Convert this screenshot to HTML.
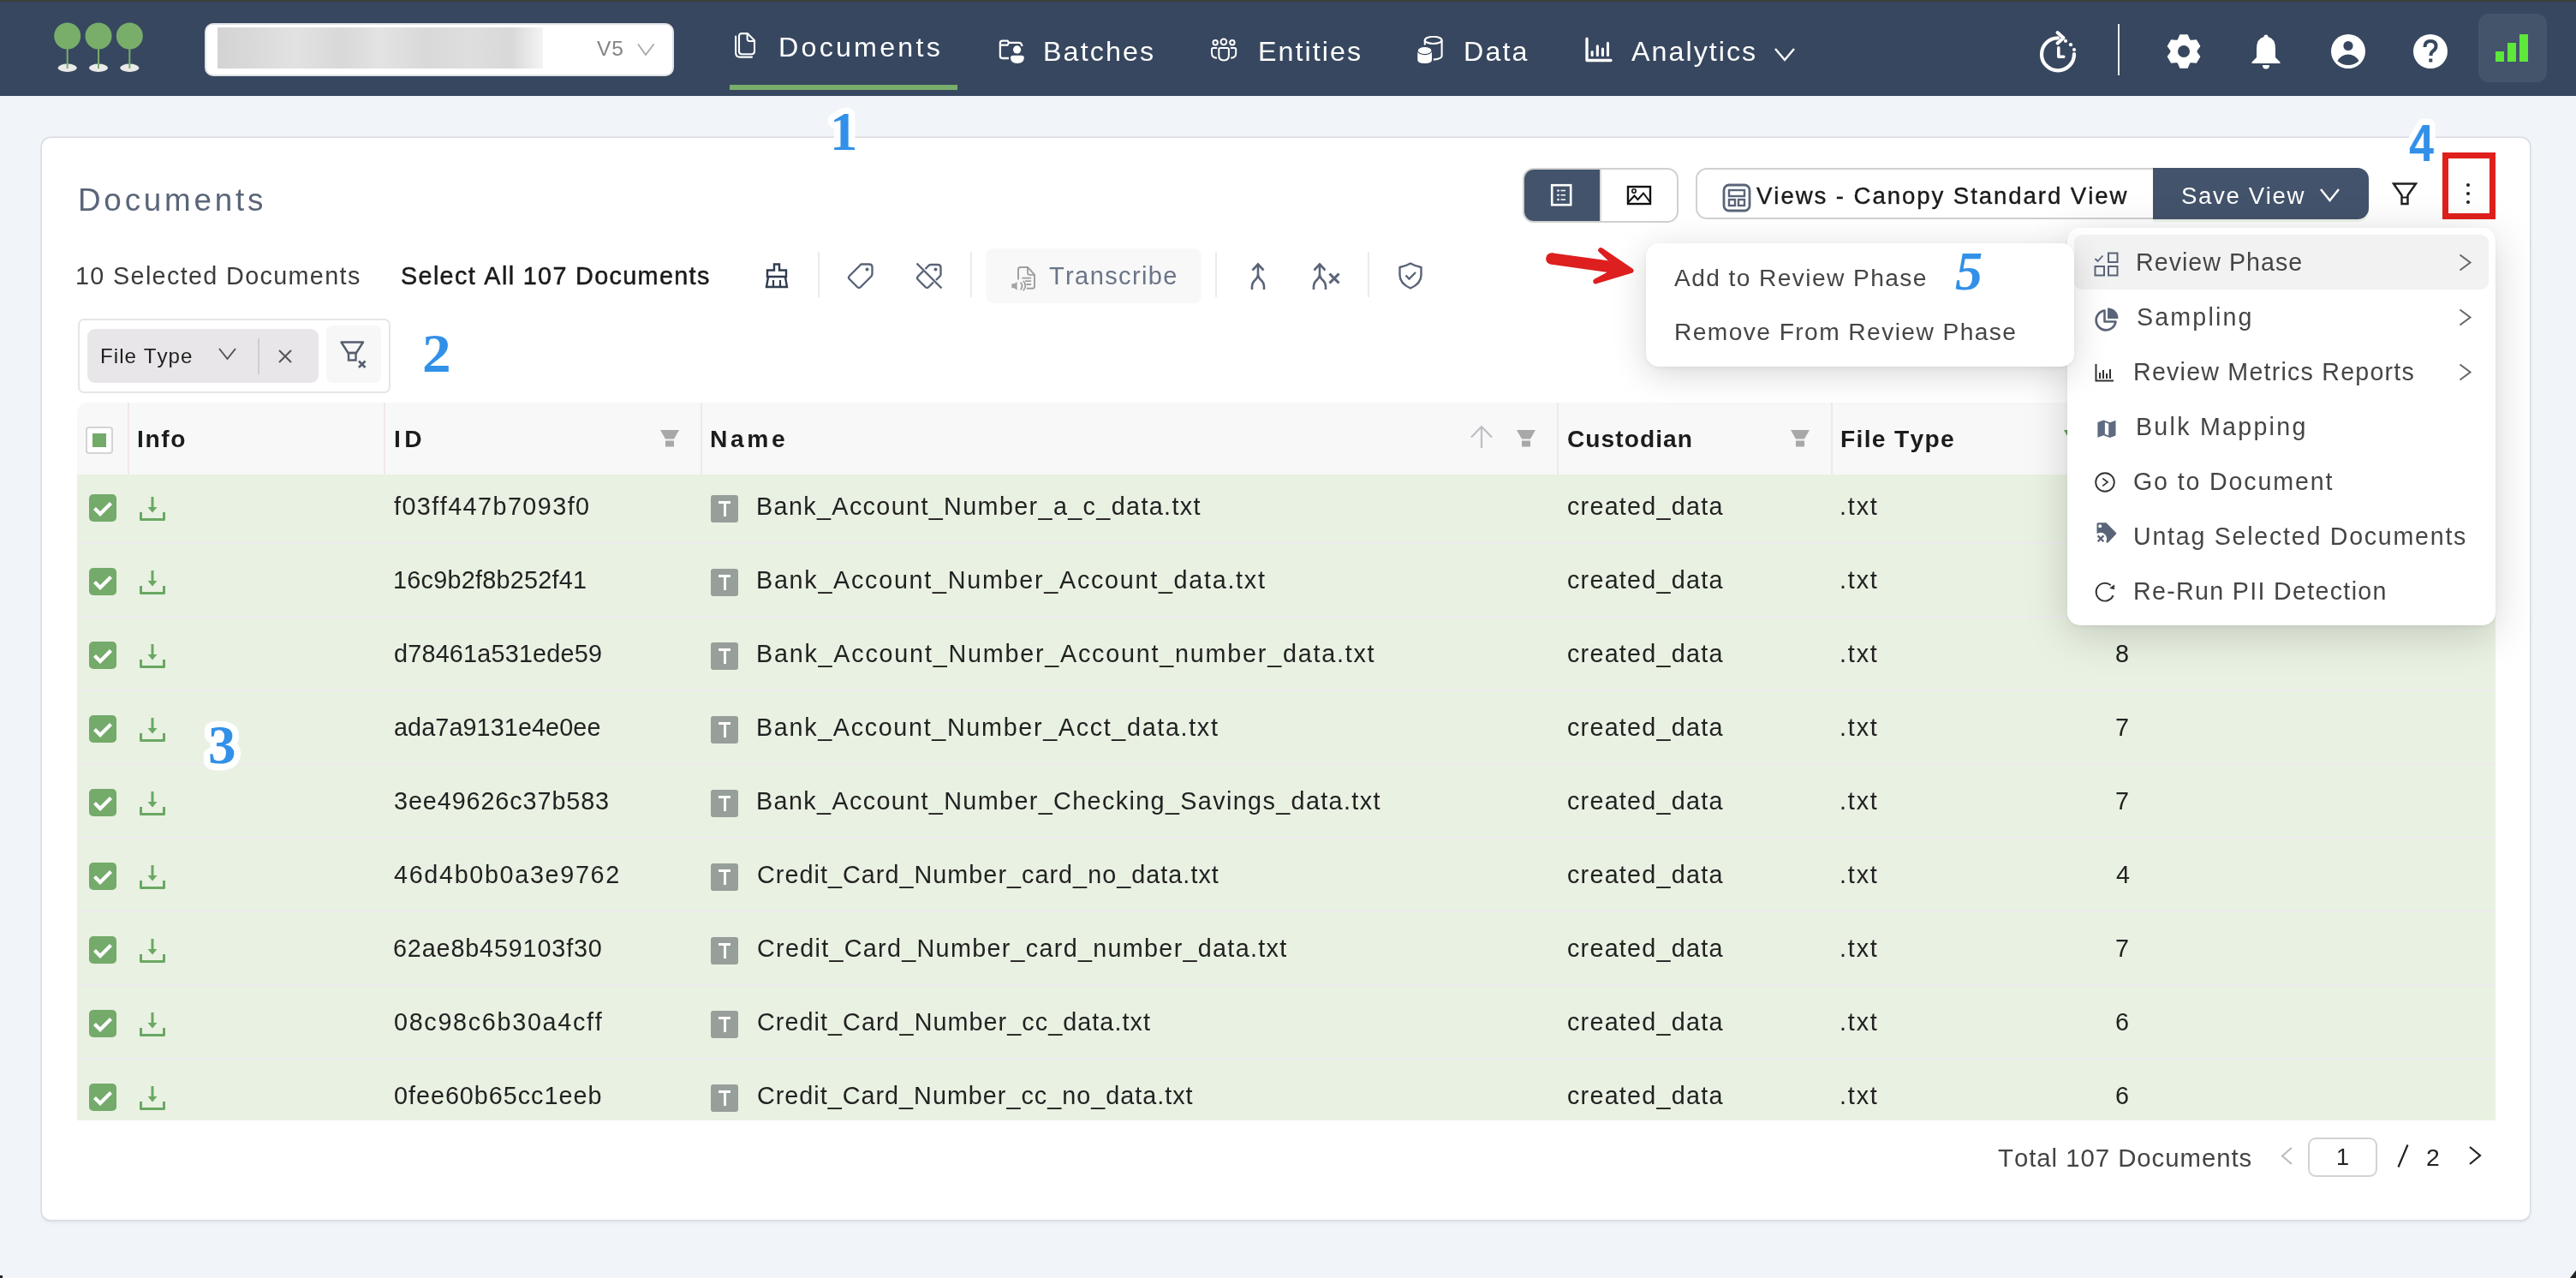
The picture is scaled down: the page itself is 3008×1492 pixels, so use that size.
<!DOCTYPE html>
<html><head><meta charset="utf-8">
<style>
html,body{margin:0;padding:0;}
body{width:3008px;height:1492px;overflow:hidden;background:#f1f4f9;position:relative;font-family:"Liberation Sans",sans-serif;font-kerning:none;}
.b{position:absolute;}
.t{position:absolute;white-space:nowrap;will-change:transform;}
</style></head><body>
<div class="b" style="left:0px;top:0px;width:3008px;height:2px;background:#3b3e38"></div><div class="b" style="left:0px;top:2px;width:3008px;height:110px;background:#37475f"></div><svg class="b" style="left:0px;top:0px;width:200px;height:112px;" viewBox="0 0 200 112"><ellipse cx="78.7" cy="79.3" rx="11" ry="4.7" fill="#eaeaea"/><rect x="77.7" y="50" width="2" height="30" fill="#78ae6a"/><circle cx="78.7" cy="42" r="15.5" fill="#78ae6a"/><ellipse cx="115.0" cy="79.3" rx="11" ry="4.7" fill="#eaeaea"/><rect x="114.0" y="50" width="2" height="30" fill="#78ae6a"/><circle cx="115.0" cy="42" r="15.5" fill="#78ae6a"/><ellipse cx="151.3" cy="79.3" rx="11" ry="4.7" fill="#eaeaea"/><rect x="150.3" y="50" width="2" height="30" fill="#78ae6a"/><circle cx="151.3" cy="42" r="15.5" fill="#78ae6a"/></svg><div class="b" style="left:239px;top:27px;width:548px;height:62px;background:#fff;border-radius:10px;border:2px solid #dfe3e8;box-sizing:border-box"></div><div class="b" style="left:254px;top:32px;width:380px;height:48px;background:linear-gradient(90deg,#d3d3d3 0%,#dadada 12%,#e2e2e2 24%,#d8d8d8 38%,#e3e3e3 50%,#d9d9d9 64%,#dedede 78%,#d8d8d8 90%,#f4f4f4 100%)"></div><div class="t" style="left:697.00px;top:45.11px;font-size:24.56px;line-height:24.56px;color:#848484;font-weight:400;letter-spacing:0.850px;font-family:'Liberation Sans', sans-serif;">V5</div><svg class="b" style="left:743px;top:49px;width:22px;height:18px;" viewBox="0 0 22 18"><path d="M2 2.5 L11 15 L20.5 2.5" fill="none" stroke="#a8a8a8" stroke-width="1.8"/></svg><svg class="b" style="left:856px;top:37px;width:28px;height:32px;" viewBox="0 0 28 32"><path d="M7 5.2 Q7 2.1 10.1 2.1 H16.8 L25 10.2 V23.1 Q25 26.2 21.9 26.2 H10.1 Q7 26.2 7 23.1 Z" fill="none" stroke="#fff" stroke-width="2.1" stroke-linejoin="round"/><path d="M16.6 2.3 V8.3 Q16.6 10.9 19.2 10.9 H24.8" fill="none" stroke="#fff" stroke-width="2" stroke-linejoin="round"/><path d="M3.1 5.6 V24.4 Q3.1 29.6 8.3 29.6 H22" fill="none" stroke="#fff" stroke-width="2.1" stroke-linecap="round"/></svg><div class="t" style="left:909.10px;top:38.88px;font-size:32.27px;line-height:32.27px;color:#fff;font-weight:400;letter-spacing:3.200px;font-family:'Liberation Sans', sans-serif;">Documents</div><div class="b" style="left:852px;top:99px;width:266px;height:6px;background:#78ae6a"></div><svg class="b" style="left:1165px;top:45px;width:32px;height:30px;" viewBox="0 0 32 30"><path d="M13 23 H5.5 Q2.9 23 2.9 20.3 V5.2 Q2.9 2.6 5.5 2.6 H11.3 L13.2 4.8 H25 Q27.6 4.8 28.6 9" fill="none" stroke="#fff" stroke-width="2.3" stroke-linejoin="round"/><path d="M2.9 7.6 H11.5 L13.2 4.8" fill="none" stroke="#fff" stroke-width="2.1" stroke-linejoin="round"/><circle cx="22.6" cy="12.9" r="4.6" fill="#fff"/><path d="M15 22.6 Q15 19.8 18 19.8 H27.8 Q30.8 19.8 30.8 22.6 Q30.8 28.9 22.9 28.9 Q15 28.9 15 22.6 Z" fill="#fff"/></svg><div class="t" style="left:1218.30px;top:43.88px;font-size:32.27px;line-height:32.27px;color:#fff;font-weight:400;letter-spacing:2.100px;font-family:'Liberation Sans', sans-serif;">Batches</div><svg class="b" style="left:1412px;top:43px;width:34px;height:30px;" viewBox="0 0 34 30"><circle cx="7.2" cy="6.7" r="2.7" fill="none" stroke="#fff" stroke-width="2"/><circle cx="16.9" cy="5.8" r="3.4" fill="none" stroke="#fff" stroke-width="2"/><circle cx="26.9" cy="6.7" r="2.7" fill="none" stroke="#fff" stroke-width="2"/><path d="M9.3 13 H4.6 Q3 13 3 14.6 V18.8 Q3 24.7 9 24.7" fill="none" stroke="#fff" stroke-width="2"/><path d="M11.3 14.8 Q11.3 13 13.1 13 H21.1 Q22.9 13 22.9 14.8 V21.6 Q22.9 27.5 17.1 27.5 Q11.3 27.5 11.3 21.6 Z" fill="none" stroke="#fff" stroke-width="2"/><path d="M24.9 13 H29.6 Q31.2 13 31.2 14.6 V18.8 Q31.2 24.7 25.2 24.7" fill="none" stroke="#fff" stroke-width="2"/></svg><div class="t" style="left:1468.50px;top:43.88px;font-size:32.27px;line-height:32.27px;color:#fff;font-weight:400;letter-spacing:2.036px;font-family:'Liberation Sans', sans-serif;">Entities</div><svg class="b" style="left:1654px;top:42px;width:32px;height:36px;" viewBox="0 0 32 36"><ellipse cx="19.7" cy="4.9" rx="9.9" ry="4.1" fill="none" stroke="#fff" stroke-width="2.1"/><path d="M9.8 4.9 V10.5 M29.6 4.9 V23.5 Q29.6 26.6 19.8 27.6" fill="none" stroke="#fff" stroke-width="2.1"/><path d="M1.3 17 V27.8 Q1.3 32.1 9.65 32.1 Q18 32.1 18 27.8 V17 Z" fill="#fff"/><ellipse cx="9.65" cy="17" rx="8.35" ry="4.6" fill="#fff" stroke="#37475f" stroke-width="1.1"/></svg><div class="t" style="left:1709.40px;top:43.88px;font-size:32.27px;line-height:32.27px;color:#fff;font-weight:400;letter-spacing:2.117px;font-family:'Liberation Sans', sans-serif;">Data</div><svg class="b" style="left:1846px;top:40px;width:40px;height:36px;" viewBox="0 0 40 36"><path d="M7 5.1 V30.5 H35" fill="none" stroke="#fff" stroke-width="3.3" stroke-linecap="round" stroke-linejoin="round"/><path d="M13.15 20.5 V24.5 M19.35 13.7 V24.5 M25.45 17 V24.5 M31.5 10.4 V24.5" fill="none" stroke="#fff" stroke-width="3.1" stroke-linecap="round"/></svg><div class="t" style="left:1904.90px;top:43.88px;font-size:32.27px;line-height:32.27px;color:#fff;font-weight:400;letter-spacing:2.012px;font-family:'Liberation Sans', sans-serif;">Analytics</div><svg class="b" style="left:2071px;top:53px;width:26px;height:20px;" viewBox="0 0 26 20"><path d="M2 4 L13 17 L24 4" fill="none" stroke="#fff" stroke-width="2.4"/></svg><svg class="b" style="left:2380px;top:34px;width:47px;height:51px;" viewBox="0 0 47 51"><path d="M23 10.3 A19 19 0 1 0 42 29" fill="none" stroke="#fff" stroke-width="4.2" stroke-linecap="round"/><path d="M22.5 4 L29.5 10.2 L22.5 16.4" fill="none" stroke="#fff" stroke-width="4" stroke-linecap="round" stroke-linejoin="round"/><circle cx="32" cy="13.8" r="2.1" fill="#fff"/><circle cx="38" cy="18.2" r="2.1" fill="#fff"/><circle cx="42" cy="24" r="2.1" fill="#fff"/><path d="M23.8 21.8 V32.2 H29.8" fill="none" stroke="#fff" stroke-width="3.6" stroke-linecap="round" stroke-linejoin="round"/></svg><div class="b" style="left:2472.5px;top:28px;width:2.0px;height:60px;background:#e8ebef"></div><svg class="b" style="left:2530px;top:40px;width:40px;height:40px;" viewBox="0 0 40 40"><g transform="translate(20,20)"><path fill="#fff" fill-rule="evenodd" d="M-6.63 -14.89 L-4.57 -19.78 L4.57 -19.78 L6.63 -14.89 L7.65 -13.25 L9.58 -13.19 L14.85 -13.84 L19.41 -5.94 L16.21 -1.70 L15.30 0.00 L16.21 1.70 L19.41 5.94 L14.85 13.84 L9.58 13.19 L7.65 13.25 L6.63 14.89 L4.57 19.78 L-4.57 19.78 L-6.63 14.89 L-7.65 13.25 L-9.58 13.19 L-14.85 13.84 L-19.41 5.94 L-16.21 1.70 L-15.30 0.00 L-16.21 -1.70 L-19.41 -5.94 L-14.85 -13.84 L-9.58 -13.19 L-7.65 -13.25 Z M 7 0 A 7 7 0 1 0 -7 0 A 7 7 0 1 0 7 0 Z"/></g></svg><svg class="b" style="left:2629px;top:40px;width:34px;height:41px;" viewBox="0 0 34 41"><path fill="#fff" d="M17 0.5 Q19.5 0.5 19.5 3 Q28 5 28 17 V27 L33.5 32.5 V34 H0.5 V32.5 L6 27 V17 Q6 5 14.5 3 Q14.5 0.5 17 0.5Z"/><path fill="#fff" d="M13 36 H21 Q21 40.5 17 40.5 Q13 40.5 13 36Z"/></svg><svg class="b" style="left:2722px;top:40px;width:40px;height:40px;" viewBox="0 0 40 40"><circle cx="20" cy="20" r="20" fill="#fff"/><circle cx="20" cy="13.5" r="5.6" fill="#37475f"/><path d="M7.5 31 Q12 23.5 20 23.5 Q28 23.5 32.5 31 Q27.5 36 20 36 Q12.5 36 7.5 31Z" fill="#37475f"/></svg><svg class="b" style="left:2818px;top:40px;width:40px;height:40px;" viewBox="0 0 40 40"><circle cx="20" cy="20" r="20" fill="#fff"/><path d="M13.5 15 Q13.5 8 20 8 Q26.5 8 26.5 14 Q26.5 17.5 22.5 20 Q20.5 21.5 20.5 25" fill="none" stroke="#37475f" stroke-width="4"/><rect x="18.3" y="28.5" width="4" height="4" fill="#37475f"/></svg><div class="b" style="left:2894px;top:16px;width:80px;height:80px;background:#44546b;border-radius:12px"></div><div class="b" style="left:2914px;top:60px;width:10px;height:12px;background:#5de83a"></div><div class="b" style="left:2928px;top:50px;width:10px;height:22px;background:#5de83a"></div><div class="b" style="left:2942px;top:40px;width:10px;height:32px;background:#5de83a"></div>
<div class="b" style="left:49px;top:161px;width:2905px;height:1263px;background:#fff;border-radius:10px;box-shadow:0 0 0 1.5px #d8dbe1, 0 3px 4px rgba(0,0,0,0.08)"></div><div class="t" style="left:91.00px;top:215.67px;font-size:36.77px;line-height:36.77px;color:#5a6579;font-weight:400;letter-spacing:3.819px;font-family:'Liberation Sans', sans-serif;">Documents</div><div class="t" style="left:88.10px;top:307.54px;font-size:28.78px;line-height:28.78px;color:#3c3c3c;font-weight:400;letter-spacing:1.343px;font-family:'Liberation Sans', sans-serif;">10 Selected Documents</div><div class="t" style="left:468.45px;top:307.64px;font-size:28.78px;line-height:28.78px;color:#1a1a1a;font-weight:400;letter-spacing:1.346px;font-family:'Liberation Sans', sans-serif;-webkit-text-stroke:0.5px #1a1a1a">Select All 107 Documents</div><svg class="b" style="left:892px;top:306px;width:30px;height:31px;" viewBox="0 0 30 31"><path d="M12 2.5 H18 V9.5 H26 V17 H4 V9.5 H12 Z" fill="none" stroke="#2f3b4f" stroke-width="2.4" stroke-linejoin="miter"/><path d="M5 17.5 L3 29 H27 L25 17.5" fill="none" stroke="#2f3b4f" stroke-width="2.4"/><path d="M11 21 V29 M19 21 V29" fill="none" stroke="#2f3b4f" stroke-width="2.2"/></svg><div class="b" style="left:955px;top:294px;width:2px;height:53px;background:#ebebeb"></div><svg class="b" style="left:989px;top:306px;width:32px;height:32px;" viewBox="0 0 32 32"><path d="M17 2.5 H26 Q29.5 2.5 29.5 6 V13.5 Q29.5 15.5 28 17 L16 29 Q14 31 12 29 L3 20 Q1 18 3 16 L15 4 Q16 2.5 17 2.5Z" fill="none" stroke="#5a6478" stroke-width="2.4"/><circle cx="23.5" cy="8.5" r="2" fill="#5a6478"/></svg><svg class="b" style="left:1069px;top:306px;width:32px;height:32px;" viewBox="0 0 32 32"><path d="M11.5 8 L15 4.5 Q16 3 18 3 H26 Q29.5 3 29.5 6.5 V14 Q29.5 15.5 28.5 16.5 L24 21" fill="none" stroke="#5a6478" stroke-width="2.4"/><path d="M9 10.5 L3 16.5 Q1 18.5 3 20.5 L11.5 29 Q13.5 31 15.5 29 L21 23.5" fill="none" stroke="#5a6478" stroke-width="2.4"/><path d="M1.5 1.5 L30.5 30.5" stroke="#5a6478" stroke-width="2.4"/><circle cx="23.5" cy="8.5" r="2" fill="#5a6478"/></svg><div class="b" style="left:1133px;top:294px;width:2px;height:53px;background:#ebebeb"></div><div class="b" style="left:1151px;top:290px;width:252px;height:64px;background:#f8f8f8;border-radius:9px"></div><svg class="b" style="left:1180px;top:310px;width:32px;height:32px;" viewBox="0 0 32 32"><path d="M9 16.4 V4.6 Q9 2 11.6 2 H20 L28 10.6 V24.2 Q28 26.8 25.4 26.8 H18.9" fill="none" stroke="#9e9e9e" stroke-width="1.9" stroke-linejoin="round"/><path d="M20 2.2 V8.2 Q20 10.8 22.6 10.8 H27.8" fill="none" stroke="#9e9e9e" stroke-width="1.8"/><path d="M14 14.6 H23.4 M17.8 18.2 H23.4 M19.2 22 H23.4" stroke="#9e9e9e" stroke-width="1.8" stroke-linecap="round"/><path d="M1.3 21.2 H4.3 L7.6 18.9 V28.7 L4.3 26.3 H1.3 Z" fill="#a3a3a3"/><path d="M12.1 20.3 Q14.9 24 12.1 27.7 M15.3 18.5 Q19.3 23.6 15.3 28.7" fill="none" stroke="#9e9e9e" stroke-width="1.8" stroke-linecap="round"/></svg><div class="t" style="left:1224.50px;top:307.69px;font-size:29.07px;line-height:29.07px;color:#6b7588;font-weight:400;letter-spacing:1.344px;font-family:'Liberation Sans', sans-serif;">Transcribe</div><div class="b" style="left:1419px;top:294px;width:2px;height:53px;background:#ebebeb"></div><svg class="b" style="left:1460px;top:306px;width:18px;height:32px;" viewBox="0 0 18 32"><path d="M9 2 V14 Q9 18 4.5 22 Q2 24.5 2 28 V32 M9 14 Q9 18 13.5 22 Q16 24.5 16 28 V32" fill="none" stroke="#5a6478" stroke-width="2.6"/><path d="M2.5 9.5 L9 2.5 L15.5 9.5" fill="none" stroke="#5a6478" stroke-width="2.6"/></svg><svg class="b" style="left:1532px;top:306px;width:34px;height:32px;" viewBox="0 0 34 32"><path d="M9 2 V14 Q9 18 4.5 22 Q2 24.5 2 28 V32 M9 14 Q9 18 13.5 22 Q16 24.5 16 28 V32" fill="none" stroke="#5a6478" stroke-width="2.6"/><path d="M2.5 9.5 L9 2.5 L15.5 9.5" fill="none" stroke="#5a6478" stroke-width="2.6"/><path d="M20.5 13.5 L31.5 24.5 M31.5 13.5 L20.5 24.5" stroke="#5a6478" stroke-width="3.1"/></svg><div class="b" style="left:1597px;top:294px;width:2px;height:53px;background:#ebebeb"></div><svg class="b" style="left:1633px;top:306px;width:28px;height:32px;" viewBox="0 0 28 32"><path d="M14 1.5 Q20 5 26.5 6 V15 Q26.5 25 14 30.5 Q1.5 25 1.5 15 V6 Q8 5 14 1.5Z" fill="none" stroke="#5a6478" stroke-width="2.4" stroke-linejoin="round"/><path d="M8.5 15.5 L12.5 19.5 L20 12" fill="none" stroke="#5a6478" stroke-width="2.4"/></svg><div class="b" style="left:1778px;top:196px;width:182px;height:64px;border:2px solid #d0d0d0;border-radius:13px;box-sizing:border-box;background:#fff"></div><div class="b" style="left:1780px;top:198px;width:88px;height:60px;background:#43536b;border-radius:11px 0 0 11px"></div><div class="b" style="left:1868px;top:198px;width:2px;height:60px;background:#d8d8d8"></div><svg class="b" style="left:1810px;top:214px;width:28px;height:28px;" viewBox="0 0 28 28"><rect x="2.2" y="2.2" width="22" height="23" fill="none" stroke="#fff" stroke-width="2.6"/><circle cx="9.5" cy="8.5" r="1.3" fill="#fff"/><circle cx="9.5" cy="13.7" r="1.3" fill="#fff"/><circle cx="9.5" cy="19" r="1.3" fill="#fff"/><path d="M12.5 8.5 H18 M12.5 13.7 H18 M12.5 19 H18" stroke="#fff" stroke-width="1.6"/></svg><svg class="b" style="left:1899px;top:216px;width:30px;height:24px;" viewBox="0 0 30 24"><rect x="2" y="2" width="26" height="20" fill="none" stroke="#111" stroke-width="2.4"/><circle cx="9" cy="7" r="2.2" fill="none" stroke="#111" stroke-width="1.6"/><path d="M2.5 20 L9.5 12.5 L13.5 17 L20 9.5 L27.5 19.5" fill="none" stroke="#111" stroke-width="2"/></svg><div class="b" style="left:1980px;top:196px;width:560px;height:60px;border:2px solid #d0d0d0;border-radius:13px;box-sizing:border-box;background:#fff"></div><svg class="b" style="left:2011px;top:214px;width:34px;height:34px;" viewBox="0 0 34 34"><rect x="2" y="2" width="30" height="30" rx="6" fill="none" stroke="#5a6478" stroke-width="2.8"/><rect x="8" y="8" width="18" height="7" fill="none" stroke="#5a6478" stroke-width="2.4"/><rect x="8" y="19" width="7" height="7" fill="none" stroke="#5a6478" stroke-width="2.4"/><rect x="19" y="19" width="7" height="7" fill="none" stroke="#5a6478" stroke-width="2.4"/></svg><div class="t" style="left:2051.40px;top:214.52px;font-size:27.62px;line-height:27.62px;color:#1a1a1a;font-weight:400;letter-spacing:1.920px;font-family:'Liberation Sans', sans-serif;-webkit-text-stroke:0.4px #1a1a1a">Views - Canopy Standard View</div><div class="b" style="left:2514px;top:196px;width:252px;height:60px;background:#43536b;border-radius:0 13px 13px 0;box-shadow:0 3px 1px rgba(110,160,90,0.12)"></div><div class="t" style="left:2546.65px;top:214.52px;font-size:27.62px;line-height:27.62px;color:#fff;font-weight:400;letter-spacing:1.619px;font-family:'Liberation Sans', sans-serif;">Save View</div><svg class="b" style="left:2708px;top:219px;width:25px;height:18px;" viewBox="0 0 25 18"><path d="M2 2 L12.5 15 L23 2" fill="none" stroke="#fff" stroke-width="2.4"/></svg><svg class="b" style="left:2793px;top:212px;width:30px;height:28px;" viewBox="0 0 30 28"><path d="M2 2.5 H28 L18.5 16 V26 H11.5 V16 Z" fill="none" stroke="#1f1f1f" stroke-width="2.4" stroke-linejoin="miter"/><path d="M11.5 18.5 H18.5" stroke="#1f1f1f" stroke-width="2"/></svg><div class="b" style="left:2879.8px;top:213.8px;width:4.399999999999636px;height:4.399999999999977px;background:#1f1f1f;border-radius:50%"></div><div class="b" style="left:2879.8px;top:223.8px;width:4.399999999999636px;height:4.399999999999977px;background:#1f1f1f;border-radius:50%"></div><div class="b" style="left:2879.8px;top:233.8px;width:4.399999999999636px;height:4.399999999999977px;background:#1f1f1f;border-radius:50%"></div><div class="b" style="left:2852px;top:178px;width:62px;height:78px;border:7.5px solid #e0201d;box-sizing:border-box"></div><div class="b" style="left:91px;top:372px;width:365px;height:87px;border:2px solid #e6e6e6;border-radius:7px;box-sizing:border-box"></div><div class="b" style="left:102px;top:384px;width:270px;height:63px;background:#e8e6e8;border-radius:9px"></div><div class="t" style="left:116.65px;top:404.37px;font-size:24.13px;line-height:24.13px;color:#1f1f1f;font-weight:400;letter-spacing:1.019px;font-family:'Liberation Sans', sans-serif;">File Type</div><svg class="b" style="left:254px;top:405px;width:23px;height:17px;" viewBox="0 0 23 17"><path d="M2 2 L11.5 14 L21 2" fill="none" stroke="#555" stroke-width="2"/></svg><div class="b" style="left:301px;top:395px;width:2px;height:42px;background:#cfcdcf"></div><svg class="b" style="left:323px;top:406px;width:20px;height:20px;" viewBox="0 0 20 20"><path d="M3 3 L17 17 M17 3 L3 17" stroke="#555" stroke-width="2"/></svg><div class="b" style="left:381px;top:380px;width:64px;height:67px;background:#f7f7f7;border-radius:7px"></div><svg class="b" style="left:396px;top:397px;width:34px;height:35px;" viewBox="0 0 34 35"><path d="M2.5 2.5 H28 L20 15 H10.5 Z" fill="none" stroke="#555e6e" stroke-width="2.4" stroke-linejoin="round"/><rect x="11" y="15" width="8.5" height="8.5" fill="none" stroke="#555e6e" stroke-width="2.4"/><path d="M23 24.5 L30.5 32 M30.5 24.5 L23 32" stroke="#555e6e" stroke-width="2.6"/></svg>
<div class="b" style="left:90px;top:470px;width:2824px;height:84px;background:#f8f8f8;border-radius:12px 12px 0 0"></div><div class="b" style="left:149px;top:470px;width:2px;height:84px;background:#f1e7e9"></div><div class="b" style="left:448px;top:470px;width:2px;height:84px;background:#f1e7e9"></div><div class="b" style="left:818px;top:470px;width:2px;height:84px;background:#f1e7e9"></div><div class="b" style="left:1818px;top:470px;width:2px;height:84px;background:#f1e7e9"></div><div class="b" style="left:2138px;top:470px;width:2px;height:84px;background:#f1e7e9"></div><div class="b" style="left:2455px;top:470px;width:2px;height:84px;background:#f1e7e9"></div><div class="b" style="left:100px;top:498px;width:32px;height:32px;border:2px solid #d4d4d4;border-radius:4px;box-sizing:border-box;background:#fff"></div><div class="b" style="left:108px;top:506px;width:16px;height:16px;background:#72aa68"></div><div class="t" style="left:159.75px;top:498.43px;font-size:28.2px;line-height:28.2px;color:#1c1c1c;font-weight:700;letter-spacing:1.633px;font-family:'Liberation Sans', sans-serif;">Info</div><div class="t" style="left:459.95px;top:498.43px;font-size:28.2px;line-height:28.2px;color:#1c1c1c;font-weight:700;letter-spacing:4.450px;font-family:'Liberation Sans', sans-serif;">ID</div><div class="t" style="left:829.35px;top:498.43px;font-size:28.2px;line-height:28.2px;color:#1c1c1c;font-weight:700;letter-spacing:3.633px;font-family:'Liberation Sans', sans-serif;">Name</div><div class="t" style="left:1829.60px;top:498.43px;font-size:28.2px;line-height:28.2px;color:#1c1c1c;font-weight:700;letter-spacing:1.013px;font-family:'Liberation Sans', sans-serif;">Custodian</div><div class="t" style="left:2148.85px;top:498.43px;font-size:28.2px;line-height:28.2px;color:#1c1c1c;font-weight:700;letter-spacing:1.312px;font-family:'Liberation Sans', sans-serif;">File Type</div><svg class="b" style="left:771px;top:502px;width:22px;height:20px;" viewBox="0 0 22 20"><path d="M0 0 H22 L16 10.5 H6 Z M6 12.5 H16 V19.5 H6Z" fill="#a8a8a8"/></svg><svg class="b" style="left:1771px;top:502px;width:22px;height:20px;" viewBox="0 0 22 20"><path d="M0 0 H22 L16 10.5 H6 Z M6 12.5 H16 V19.5 H6Z" fill="#a8a8a8"/></svg><svg class="b" style="left:2091px;top:502px;width:22px;height:20px;" viewBox="0 0 22 20"><path d="M0 0 H22 L16 10.5 H6 Z M6 12.5 H16 V19.5 H6Z" fill="#a8a8a8"/></svg><svg class="b" style="left:2410px;top:502px;width:22px;height:20px;" viewBox="0 0 22 20"><path d="M0 0 H22 L16 10.5 H6 Z M6 12.5 H16 V19.5 H6Z" fill="#5a9f52"/></svg><svg class="b" style="left:1716px;top:496px;width:28px;height:28px;" viewBox="0 0 28 28"><path d="M14 2 V27 M2 14.5 L14 2 L26 14.5" fill="none" stroke="#bcbec4" stroke-width="2.2"/></svg><div class="b" style="left:90px;top:554px;width:2824px;height:753.6px;overflow:hidden"><div class="b" style="left:0;top:-5px;width:2824px;height:86px;background:#e9f1e2;border-bottom:2px solid #ecebed;box-sizing:border-box"></div><div class="b" style="left:14px;top:23px;width:32px;height:32px;background:#74aa6a;border-radius:5px"></div><svg class="b" style="left:14px;top:23px;width:32px;height:32px" viewBox="0 0 32 32"><path d="M6.5 16.5 L13 23 L25.5 10.5" fill="none" stroke="#fff" stroke-width="4.2"/></svg><svg class="b" style="left:73px;top:25px;width:30px;height:30px" viewBox="0 0 30 30"><path d="M15 1 V17" stroke="#6aa863" stroke-width="3"/><path d="M9.5 13 L15 19.5 L20.5 13Z" fill="#6aa863"/><path d="M1.5 19 V27.5 H28.5 V19" fill="none" stroke="#6aa863" stroke-width="3" stroke-linejoin="round"/></svg><div class="b" style="left:740px;top:24px;width:32px;height:32px;background:#979f9b;border-radius:3px"></div><div class="b" style="left:749px;top:31px;width:14px;height:3px;background:#fff"></div><div class="b" style="left:754.5px;top:31px;width:3px;height:18px;background:#fff"></div><div class="t" style="margin-left:-90px;margin-top:-554px;left:460.35px;top:576.94px;font-size:28.78px;line-height:28.78px;color:#222;font-weight:400;letter-spacing:1.439px;font-family:'Liberation Sans', sans-serif;">f03ff447b7093f0</div><div class="t" style="margin-left:-90px;margin-top:-554px;left:882.95px;top:576.94px;font-size:28.78px;line-height:28.78px;color:#222;font-weight:400;letter-spacing:1.355px;font-family:'Liberation Sans', sans-serif;">Bank_Account_Number_a_c_data.txt</div><div class="t" style="margin-left:-90px;margin-top:-554px;left:1829.70px;top:576.94px;font-size:28.78px;line-height:28.78px;color:#222;font-weight:400;letter-spacing:1.227px;font-family:'Liberation Sans', sans-serif;">created_data</div><div class="t" style="margin-left:-90px;margin-top:-554px;left:2148.10px;top:576.94px;font-size:28.78px;line-height:28.78px;color:#222;font-weight:400;letter-spacing:1.833px;font-family:'Liberation Sans', sans-serif;">.txt</div><div class="t" style="margin-left:-90px;margin-top:-554px;left:2469.75px;top:576.94px;font-size:28.78px;line-height:28.78px;color:#222;font-weight:400;letter-spacing:0.000px;font-family:'Liberation Sans', sans-serif;">9</div><div class="b" style="left:0;top:81px;width:2824px;height:86px;background:#e9f1e2;border-bottom:2px solid #ecebed;box-sizing:border-box"></div><div class="b" style="left:14px;top:109px;width:32px;height:32px;background:#74aa6a;border-radius:5px"></div><svg class="b" style="left:14px;top:109px;width:32px;height:32px" viewBox="0 0 32 32"><path d="M6.5 16.5 L13 23 L25.5 10.5" fill="none" stroke="#fff" stroke-width="4.2"/></svg><svg class="b" style="left:73px;top:111px;width:30px;height:30px" viewBox="0 0 30 30"><path d="M15 1 V17" stroke="#6aa863" stroke-width="3"/><path d="M9.5 13 L15 19.5 L20.5 13Z" fill="#6aa863"/><path d="M1.5 19 V27.5 H28.5 V19" fill="none" stroke="#6aa863" stroke-width="3" stroke-linejoin="round"/></svg><div class="b" style="left:740px;top:110px;width:32px;height:32px;background:#979f9b;border-radius:3px"></div><div class="b" style="left:749px;top:117px;width:14px;height:3px;background:#fff"></div><div class="b" style="left:754.5px;top:117px;width:3px;height:18px;background:#fff"></div><div class="t" style="margin-left:-90px;margin-top:-554px;left:458.60px;top:662.94px;font-size:28.78px;line-height:28.78px;color:#222;font-weight:400;letter-spacing:0.254px;font-family:'Liberation Sans', sans-serif;">16c9b2f8b252f41</div><div class="t" style="margin-left:-90px;margin-top:-554px;left:882.95px;top:662.94px;font-size:28.78px;line-height:28.78px;color:#222;font-weight:400;letter-spacing:1.709px;font-family:'Liberation Sans', sans-serif;">Bank_Account_Number_Account_data.txt</div><div class="t" style="margin-left:-90px;margin-top:-554px;left:1829.70px;top:662.94px;font-size:28.78px;line-height:28.78px;color:#222;font-weight:400;letter-spacing:1.227px;font-family:'Liberation Sans', sans-serif;">created_data</div><div class="t" style="margin-left:-90px;margin-top:-554px;left:2148.10px;top:662.94px;font-size:28.78px;line-height:28.78px;color:#222;font-weight:400;letter-spacing:1.833px;font-family:'Liberation Sans', sans-serif;">.txt</div><div class="t" style="margin-left:-90px;margin-top:-554px;left:2469.75px;top:662.94px;font-size:28.78px;line-height:28.78px;color:#222;font-weight:400;letter-spacing:0.000px;font-family:'Liberation Sans', sans-serif;">9</div><div class="b" style="left:0;top:167px;width:2824px;height:86px;background:#e9f1e2;border-bottom:2px solid #ecebed;box-sizing:border-box"></div><div class="b" style="left:14px;top:195px;width:32px;height:32px;background:#74aa6a;border-radius:5px"></div><svg class="b" style="left:14px;top:195px;width:32px;height:32px" viewBox="0 0 32 32"><path d="M6.5 16.5 L13 23 L25.5 10.5" fill="none" stroke="#fff" stroke-width="4.2"/></svg><svg class="b" style="left:73px;top:197px;width:30px;height:30px" viewBox="0 0 30 30"><path d="M15 1 V17" stroke="#6aa863" stroke-width="3"/><path d="M9.5 13 L15 19.5 L20.5 13Z" fill="#6aa863"/><path d="M1.5 19 V27.5 H28.5 V19" fill="none" stroke="#6aa863" stroke-width="3" stroke-linejoin="round"/></svg><div class="b" style="left:740px;top:196px;width:32px;height:32px;background:#979f9b;border-radius:3px"></div><div class="b" style="left:749px;top:203px;width:14px;height:3px;background:#fff"></div><div class="b" style="left:754.5px;top:203px;width:3px;height:18px;background:#fff"></div><div class="t" style="margin-left:-90px;margin-top:-554px;left:459.60px;top:748.94px;font-size:28.78px;line-height:28.78px;color:#222;font-weight:400;letter-spacing:0.211px;font-family:'Liberation Sans', sans-serif;">d78461a531ede59</div><div class="t" style="margin-left:-90px;margin-top:-554px;left:882.95px;top:748.94px;font-size:28.78px;line-height:28.78px;color:#222;font-weight:400;letter-spacing:1.761px;font-family:'Liberation Sans', sans-serif;">Bank_Account_Number_Account_number_data.txt</div><div class="t" style="margin-left:-90px;margin-top:-554px;left:1829.70px;top:748.94px;font-size:28.78px;line-height:28.78px;color:#222;font-weight:400;letter-spacing:1.227px;font-family:'Liberation Sans', sans-serif;">created_data</div><div class="t" style="margin-left:-90px;margin-top:-554px;left:2148.10px;top:748.94px;font-size:28.78px;line-height:28.78px;color:#222;font-weight:400;letter-spacing:1.833px;font-family:'Liberation Sans', sans-serif;">.txt</div><div class="t" style="margin-left:-90px;margin-top:-554px;left:2469.75px;top:748.94px;font-size:28.78px;line-height:28.78px;color:#222;font-weight:400;letter-spacing:0.000px;font-family:'Liberation Sans', sans-serif;">8</div><div class="b" style="left:0;top:253px;width:2824px;height:86px;background:#e9f1e2;border-bottom:2px solid #ecebed;box-sizing:border-box"></div><div class="b" style="left:14px;top:281px;width:32px;height:32px;background:#74aa6a;border-radius:5px"></div><svg class="b" style="left:14px;top:281px;width:32px;height:32px" viewBox="0 0 32 32"><path d="M6.5 16.5 L13 23 L25.5 10.5" fill="none" stroke="#fff" stroke-width="4.2"/></svg><svg class="b" style="left:73px;top:283px;width:30px;height:30px" viewBox="0 0 30 30"><path d="M15 1 V17" stroke="#6aa863" stroke-width="3"/><path d="M9.5 13 L15 19.5 L20.5 13Z" fill="#6aa863"/><path d="M1.5 19 V27.5 H28.5 V19" fill="none" stroke="#6aa863" stroke-width="3" stroke-linejoin="round"/></svg><div class="b" style="left:740px;top:282px;width:32px;height:32px;background:#979f9b;border-radius:3px"></div><div class="b" style="left:749px;top:289px;width:14px;height:3px;background:#fff"></div><div class="b" style="left:754.5px;top:289px;width:3px;height:18px;background:#fff"></div><div class="t" style="margin-left:-90px;margin-top:-554px;left:459.60px;top:834.94px;font-size:28.78px;line-height:28.78px;color:#222;font-weight:400;letter-spacing:0.104px;font-family:'Liberation Sans', sans-serif;">ada7a9131e4e0ee</div><div class="t" style="margin-left:-90px;margin-top:-554px;left:882.95px;top:834.94px;font-size:28.78px;line-height:28.78px;color:#222;font-weight:400;letter-spacing:1.650px;font-family:'Liberation Sans', sans-serif;">Bank_Account_Number_Acct_data.txt</div><div class="t" style="margin-left:-90px;margin-top:-554px;left:1829.70px;top:834.94px;font-size:28.78px;line-height:28.78px;color:#222;font-weight:400;letter-spacing:1.227px;font-family:'Liberation Sans', sans-serif;">created_data</div><div class="t" style="margin-left:-90px;margin-top:-554px;left:2148.10px;top:834.94px;font-size:28.78px;line-height:28.78px;color:#222;font-weight:400;letter-spacing:1.833px;font-family:'Liberation Sans', sans-serif;">.txt</div><div class="t" style="margin-left:-90px;margin-top:-554px;left:2469.75px;top:834.94px;font-size:28.78px;line-height:28.78px;color:#222;font-weight:400;letter-spacing:0.000px;font-family:'Liberation Sans', sans-serif;">7</div><div class="b" style="left:0;top:339px;width:2824px;height:86px;background:#e9f1e2;border-bottom:2px solid #ecebed;box-sizing:border-box"></div><div class="b" style="left:14px;top:367px;width:32px;height:32px;background:#74aa6a;border-radius:5px"></div><svg class="b" style="left:14px;top:367px;width:32px;height:32px" viewBox="0 0 32 32"><path d="M6.5 16.5 L13 23 L25.5 10.5" fill="none" stroke="#fff" stroke-width="4.2"/></svg><svg class="b" style="left:73px;top:369px;width:30px;height:30px" viewBox="0 0 30 30"><path d="M15 1 V17" stroke="#6aa863" stroke-width="3"/><path d="M9.5 13 L15 19.5 L20.5 13Z" fill="#6aa863"/><path d="M1.5 19 V27.5 H28.5 V19" fill="none" stroke="#6aa863" stroke-width="3" stroke-linejoin="round"/></svg><div class="b" style="left:740px;top:368px;width:32px;height:32px;background:#979f9b;border-radius:3px"></div><div class="b" style="left:749px;top:375px;width:14px;height:3px;background:#fff"></div><div class="b" style="left:754.5px;top:375px;width:3px;height:18px;background:#fff"></div><div class="t" style="margin-left:-90px;margin-top:-554px;left:459.60px;top:920.94px;font-size:28.78px;line-height:28.78px;color:#222;font-weight:400;letter-spacing:0.911px;font-family:'Liberation Sans', sans-serif;">3ee49626c37b583</div><div class="t" style="margin-left:-90px;margin-top:-554px;left:882.95px;top:920.94px;font-size:28.78px;line-height:28.78px;color:#222;font-weight:400;letter-spacing:1.364px;font-family:'Liberation Sans', sans-serif;">Bank_Account_Number_Checking_Savings_data.txt</div><div class="t" style="margin-left:-90px;margin-top:-554px;left:1829.70px;top:920.94px;font-size:28.78px;line-height:28.78px;color:#222;font-weight:400;letter-spacing:1.227px;font-family:'Liberation Sans', sans-serif;">created_data</div><div class="t" style="margin-left:-90px;margin-top:-554px;left:2148.10px;top:920.94px;font-size:28.78px;line-height:28.78px;color:#222;font-weight:400;letter-spacing:1.833px;font-family:'Liberation Sans', sans-serif;">.txt</div><div class="t" style="margin-left:-90px;margin-top:-554px;left:2469.75px;top:920.94px;font-size:28.78px;line-height:28.78px;color:#222;font-weight:400;letter-spacing:0.000px;font-family:'Liberation Sans', sans-serif;">7</div><div class="b" style="left:0;top:425px;width:2824px;height:86px;background:#e9f1e2;border-bottom:2px solid #ecebed;box-sizing:border-box"></div><div class="b" style="left:14px;top:453px;width:32px;height:32px;background:#74aa6a;border-radius:5px"></div><svg class="b" style="left:14px;top:453px;width:32px;height:32px" viewBox="0 0 32 32"><path d="M6.5 16.5 L13 23 L25.5 10.5" fill="none" stroke="#fff" stroke-width="4.2"/></svg><svg class="b" style="left:73px;top:455px;width:30px;height:30px" viewBox="0 0 30 30"><path d="M15 1 V17" stroke="#6aa863" stroke-width="3"/><path d="M9.5 13 L15 19.5 L20.5 13Z" fill="#6aa863"/><path d="M1.5 19 V27.5 H28.5 V19" fill="none" stroke="#6aa863" stroke-width="3" stroke-linejoin="round"/></svg><div class="b" style="left:740px;top:454px;width:32px;height:32px;background:#979f9b;border-radius:3px"></div><div class="b" style="left:749px;top:461px;width:14px;height:3px;background:#fff"></div><div class="b" style="left:754.5px;top:461px;width:3px;height:18px;background:#fff"></div><div class="t" style="margin-left:-90px;margin-top:-554px;left:460.10px;top:1006.94px;font-size:28.78px;line-height:28.78px;color:#222;font-weight:400;letter-spacing:1.661px;font-family:'Liberation Sans', sans-serif;">46d4b0b0a3e9762</div><div class="t" style="margin-left:-90px;margin-top:-554px;left:883.95px;top:1006.94px;font-size:28.78px;line-height:28.78px;color:#222;font-weight:400;letter-spacing:1.034px;font-family:'Liberation Sans', sans-serif;">Credit_Card_Number_card_no_data.txt</div><div class="t" style="margin-left:-90px;margin-top:-554px;left:1829.70px;top:1006.94px;font-size:28.78px;line-height:28.78px;color:#222;font-weight:400;letter-spacing:1.227px;font-family:'Liberation Sans', sans-serif;">created_data</div><div class="t" style="margin-left:-90px;margin-top:-554px;left:2148.10px;top:1006.94px;font-size:28.78px;line-height:28.78px;color:#222;font-weight:400;letter-spacing:1.833px;font-family:'Liberation Sans', sans-serif;">.txt</div><div class="t" style="margin-left:-90px;margin-top:-554px;left:2470.50px;top:1006.94px;font-size:28.78px;line-height:28.78px;color:#222;font-weight:400;letter-spacing:0.000px;font-family:'Liberation Sans', sans-serif;">4</div><div class="b" style="left:0;top:511px;width:2824px;height:86px;background:#e9f1e2;border-bottom:2px solid #ecebed;box-sizing:border-box"></div><div class="b" style="left:14px;top:539px;width:32px;height:32px;background:#74aa6a;border-radius:5px"></div><svg class="b" style="left:14px;top:539px;width:32px;height:32px" viewBox="0 0 32 32"><path d="M6.5 16.5 L13 23 L25.5 10.5" fill="none" stroke="#fff" stroke-width="4.2"/></svg><svg class="b" style="left:73px;top:541px;width:30px;height:30px" viewBox="0 0 30 30"><path d="M15 1 V17" stroke="#6aa863" stroke-width="3"/><path d="M9.5 13 L15 19.5 L20.5 13Z" fill="#6aa863"/><path d="M1.5 19 V27.5 H28.5 V19" fill="none" stroke="#6aa863" stroke-width="3" stroke-linejoin="round"/></svg><div class="b" style="left:740px;top:540px;width:32px;height:32px;background:#979f9b;border-radius:3px"></div><div class="b" style="left:749px;top:547px;width:14px;height:3px;background:#fff"></div><div class="b" style="left:754.5px;top:547px;width:3px;height:18px;background:#fff"></div><div class="t" style="margin-left:-90px;margin-top:-554px;left:459.35px;top:1092.94px;font-size:28.78px;line-height:28.78px;color:#222;font-weight:400;letter-spacing:0.846px;font-family:'Liberation Sans', sans-serif;">62ae8b459103f30</div><div class="t" style="margin-left:-90px;margin-top:-554px;left:883.95px;top:1092.94px;font-size:28.78px;line-height:28.78px;color:#222;font-weight:400;letter-spacing:1.288px;font-family:'Liberation Sans', sans-serif;">Credit_Card_Number_card_number_data.txt</div><div class="t" style="margin-left:-90px;margin-top:-554px;left:1829.70px;top:1092.94px;font-size:28.78px;line-height:28.78px;color:#222;font-weight:400;letter-spacing:1.227px;font-family:'Liberation Sans', sans-serif;">created_data</div><div class="t" style="margin-left:-90px;margin-top:-554px;left:2148.10px;top:1092.94px;font-size:28.78px;line-height:28.78px;color:#222;font-weight:400;letter-spacing:1.833px;font-family:'Liberation Sans', sans-serif;">.txt</div><div class="t" style="margin-left:-90px;margin-top:-554px;left:2469.75px;top:1092.94px;font-size:28.78px;line-height:28.78px;color:#222;font-weight:400;letter-spacing:0.000px;font-family:'Liberation Sans', sans-serif;">7</div><div class="b" style="left:0;top:597px;width:2824px;height:86px;background:#e9f1e2;border-bottom:2px solid #ecebed;box-sizing:border-box"></div><div class="b" style="left:14px;top:625px;width:32px;height:32px;background:#74aa6a;border-radius:5px"></div><svg class="b" style="left:14px;top:625px;width:32px;height:32px" viewBox="0 0 32 32"><path d="M6.5 16.5 L13 23 L25.5 10.5" fill="none" stroke="#fff" stroke-width="4.2"/></svg><svg class="b" style="left:73px;top:627px;width:30px;height:30px" viewBox="0 0 30 30"><path d="M15 1 V17" stroke="#6aa863" stroke-width="3"/><path d="M9.5 13 L15 19.5 L20.5 13Z" fill="#6aa863"/><path d="M1.5 19 V27.5 H28.5 V19" fill="none" stroke="#6aa863" stroke-width="3" stroke-linejoin="round"/></svg><div class="b" style="left:740px;top:626px;width:32px;height:32px;background:#979f9b;border-radius:3px"></div><div class="b" style="left:749px;top:633px;width:14px;height:3px;background:#fff"></div><div class="b" style="left:754.5px;top:633px;width:3px;height:18px;background:#fff"></div><div class="t" style="margin-left:-90px;margin-top:-554px;left:459.60px;top:1178.94px;font-size:28.78px;line-height:28.78px;color:#222;font-weight:400;letter-spacing:1.686px;font-family:'Liberation Sans', sans-serif;">08c98c6b30a4cff</div><div class="t" style="margin-left:-90px;margin-top:-554px;left:883.95px;top:1178.94px;font-size:28.78px;line-height:28.78px;color:#222;font-weight:400;letter-spacing:1.048px;font-family:'Liberation Sans', sans-serif;">Credit_Card_Number_cc_data.txt</div><div class="t" style="margin-left:-90px;margin-top:-554px;left:1829.70px;top:1178.94px;font-size:28.78px;line-height:28.78px;color:#222;font-weight:400;letter-spacing:1.227px;font-family:'Liberation Sans', sans-serif;">created_data</div><div class="t" style="margin-left:-90px;margin-top:-554px;left:2148.10px;top:1178.94px;font-size:28.78px;line-height:28.78px;color:#222;font-weight:400;letter-spacing:1.833px;font-family:'Liberation Sans', sans-serif;">.txt</div><div class="t" style="margin-left:-90px;margin-top:-554px;left:2469.75px;top:1178.94px;font-size:28.78px;line-height:28.78px;color:#222;font-weight:400;letter-spacing:0.000px;font-family:'Liberation Sans', sans-serif;">6</div><div class="b" style="left:0;top:683px;width:2824px;height:86px;background:#e9f1e2;border-bottom:2px solid #ecebed;box-sizing:border-box"></div><div class="b" style="left:14px;top:711px;width:32px;height:32px;background:#74aa6a;border-radius:5px"></div><svg class="b" style="left:14px;top:711px;width:32px;height:32px" viewBox="0 0 32 32"><path d="M6.5 16.5 L13 23 L25.5 10.5" fill="none" stroke="#fff" stroke-width="4.2"/></svg><svg class="b" style="left:73px;top:713px;width:30px;height:30px" viewBox="0 0 30 30"><path d="M15 1 V17" stroke="#6aa863" stroke-width="3"/><path d="M9.5 13 L15 19.5 L20.5 13Z" fill="#6aa863"/><path d="M1.5 19 V27.5 H28.5 V19" fill="none" stroke="#6aa863" stroke-width="3" stroke-linejoin="round"/></svg><div class="b" style="left:740px;top:712px;width:32px;height:32px;background:#979f9b;border-radius:3px"></div><div class="b" style="left:749px;top:719px;width:14px;height:3px;background:#fff"></div><div class="b" style="left:754.5px;top:719px;width:3px;height:18px;background:#fff"></div><div class="t" style="margin-left:-90px;margin-top:-554px;left:459.60px;top:1264.94px;font-size:28.78px;line-height:28.78px;color:#222;font-weight:400;letter-spacing:0.975px;font-family:'Liberation Sans', sans-serif;">0fee60b65cc1eeb</div><div class="t" style="margin-left:-90px;margin-top:-554px;left:883.95px;top:1264.94px;font-size:28.78px;line-height:28.78px;color:#222;font-weight:400;letter-spacing:1.003px;font-family:'Liberation Sans', sans-serif;">Credit_Card_Number_cc_no_data.txt</div><div class="t" style="margin-left:-90px;margin-top:-554px;left:1829.70px;top:1264.94px;font-size:28.78px;line-height:28.78px;color:#222;font-weight:400;letter-spacing:1.227px;font-family:'Liberation Sans', sans-serif;">created_data</div><div class="t" style="margin-left:-90px;margin-top:-554px;left:2148.10px;top:1264.94px;font-size:28.78px;line-height:28.78px;color:#222;font-weight:400;letter-spacing:1.833px;font-family:'Liberation Sans', sans-serif;">.txt</div><div class="t" style="margin-left:-90px;margin-top:-554px;left:2469.75px;top:1264.94px;font-size:28.78px;line-height:28.78px;color:#222;font-weight:400;letter-spacing:0.000px;font-family:'Liberation Sans', sans-serif;">6</div></div><div class="t" style="left:2333.00px;top:1337.35px;font-size:29.36px;line-height:29.36px;color:#444;font-weight:400;letter-spacing:0.958px;font-family:'Liberation Sans', sans-serif;">Total 107 Documents</div><svg class="b" style="left:2661px;top:1338px;width:18px;height:23px;" viewBox="0 0 18 23"><path d="M15 2 L4 11.5 L15 21" fill="none" stroke="#bdbdbd" stroke-width="2.2"/></svg><div class="b" style="left:2694.5px;top:1327.5px;width:81.5px;height:46.5px;border:2px solid #d3d3d3;border-radius:9px;box-sizing:border-box;background:#fff"></div><div class="t" style="left:2728.40px;top:1337.64px;font-size:27px;line-height:27px;color:#222;font-weight:400;letter-spacing:0.000px;font-family:'Liberation Sans', sans-serif;">1</div><svg class="b" style="left:2798px;top:1335px;width:16px;height:29px;" viewBox="0 0 16 29"><path d="M13.5 1.5 L2.5 27.5" stroke="#222" stroke-width="2.2"/></svg><div class="t" style="left:2833.05px;top:1337.01px;font-size:28.34px;line-height:28.34px;color:#222;font-weight:400;letter-spacing:0.000px;font-family:'Liberation Sans', sans-serif;">2</div><svg class="b" style="left:2881px;top:1337px;width:19px;height:24px;" viewBox="0 0 19 24"><path d="M3 2 L15 12 L3 22" fill="none" stroke="#222" stroke-width="2.2"/></svg>
<div class="b" style="left:2414px;top:266px;width:500px;height:464px;background:#fff;border-radius:15px;box-shadow:0 10px 50px rgba(0,0,0,0.17), 0 2px 6px rgba(0,0,0,0.06)"></div><div class="b" style="left:2422px;top:274px;width:484px;height:64px;background:#f2f2f2;border-radius:9px"></div><div class="t" style="left:2494.45px;top:292.26px;font-size:28.63px;line-height:28.63px;color:#454545;font-weight:400;letter-spacing:1.027px;font-family:'Liberation Sans', sans-serif;">Review Phase</div><svg class="b" style="left:2870px;top:296.2px;width:17px;height:21.0px;" viewBox="0 0 17 21"><path d="M2.5 1.5 L14.5 10.5 L2.5 19.5" fill="none" stroke="#666" stroke-width="2"/></svg><div class="t" style="left:2495.05px;top:355.96px;font-size:28.63px;line-height:28.63px;color:#454545;font-weight:400;letter-spacing:2.171px;font-family:'Liberation Sans', sans-serif;">Sampling</div><svg class="b" style="left:2870px;top:359.9px;width:17px;height:21.0px;" viewBox="0 0 17 21"><path d="M2.5 1.5 L14.5 10.5 L2.5 19.5" fill="none" stroke="#666" stroke-width="2"/></svg><div class="t" style="left:2490.95px;top:419.76px;font-size:28.63px;line-height:28.63px;color:#454545;font-weight:400;letter-spacing:1.217px;font-family:'Liberation Sans', sans-serif;">Review Metrics Reports</div><svg class="b" style="left:2870px;top:423.7px;width:17px;height:21.0px;" viewBox="0 0 17 21"><path d="M2.5 1.5 L14.5 10.5 L2.5 19.5" fill="none" stroke="#666" stroke-width="2"/></svg><div class="t" style="left:2494.35px;top:484.06px;font-size:28.63px;line-height:28.63px;color:#454545;font-weight:400;letter-spacing:2.264px;font-family:'Liberation Sans', sans-serif;">Bulk Mapping</div><div class="t" style="left:2490.95px;top:548.06px;font-size:28.63px;line-height:28.63px;color:#454545;font-weight:400;letter-spacing:1.850px;font-family:'Liberation Sans', sans-serif;">Go to Document</div><div class="t" style="left:2491.30px;top:612.06px;font-size:28.63px;line-height:28.63px;color:#454545;font-weight:400;letter-spacing:1.737px;font-family:'Liberation Sans', sans-serif;">Untag Selected Documents</div><div class="t" style="left:2491.05px;top:676.06px;font-size:28.63px;line-height:28.63px;color:#454545;font-weight:400;letter-spacing:1.316px;font-family:'Liberation Sans', sans-serif;">Re-Run PII Detection</div><svg class="b" style="left:2445px;top:294px;width:30px;height:30px;" viewBox="0 0 30 30"><path d="M1.5 8 L4.5 11 L10.5 4.5" fill="none" stroke="#5a6478" stroke-width="1.8"/><rect x="17" y="1.5" width="10.5" height="10.5" fill="none" stroke="#5a6478" stroke-width="2"/><rect x="1.5" y="17" width="10.5" height="10.5" fill="none" stroke="#5a6478" stroke-width="2"/><rect x="17" y="17" width="10.5" height="10.5" fill="none" stroke="#5a6478" stroke-width="2"/></svg><svg class="b" style="left:2445px;top:358px;width:31px;height:30px;" viewBox="0 0 31 30"><path d="M12.5 4.5 A11.5 11.5 0 1 0 25.5 17.5 H12.5 Z" fill="none" stroke="#5a6478" stroke-width="2.6" stroke-linejoin="round"/><path d="M16 1.5 A12 12 0 0 1 28.5 14 H16 Z" fill="#5a6478"/></svg><svg class="b" style="left:2446px;top:424px;width:24px;height:22px;" viewBox="0 0 24 22"><path d="M1.5 1 V20.5 H22" fill="none" stroke="#333" stroke-width="2"/><path d="M6 11 V18 M10 8 V18 M14 12 V18 M18 7 V18" stroke="#333" stroke-width="2"/></svg><svg class="b" style="left:2449px;top:489px;width:23px;height:23px;" viewBox="0 0 23 23"><path d="M0.4 4.1 L7.3 1.5 L14.8 4.3 L21.5 1.8 V19.5 L14.8 22 L7.3 19.2 L0.4 21.8 Z" fill="#5f6b80"/><path d="M8.9 4.1 L13.2 5.8 V19.6 L8.9 17.8 Z" fill="#fff"/></svg><svg class="b" style="left:2445px;top:550px;width:27px;height:26px;" viewBox="0 0 27 26"><circle cx="13" cy="13" r="10.8" fill="none" stroke="#333" stroke-width="1.9"/><path d="M10.3 8.5 L16 12.8 L10.3 17.4" fill="none" stroke="#333" stroke-width="1.7"/></svg><svg class="b" style="left:2447px;top:609px;width:26px;height:27px;" viewBox="0 0 26 27"><path d="M1.5 2.8 Q1.5 1.3 3 1.3 H12.4 L24 13 Q24.8 13.8 24 14.6 L14.8 24.3 Q13.8 25.2 12.8 24.3 L1.5 13.5 Z" fill="#5a6478"/><circle cx="6" cy="20" r="7.2" fill="#fff"/><circle cx="5.2" cy="5.3" r="2" fill="#fff"/><path d="M2.6 16.4 L9.4 23.3 M9.4 16.4 L2.6 23.3" stroke="#5a6478" stroke-width="2.3"/></svg><svg class="b" style="left:2445px;top:678px;width:27px;height:26px;" viewBox="0 0 27 26"><path d="M19.7 5.2 A10.4 10.4 0 1 0 22.6 17.2" fill="none" stroke="#333" stroke-width="1.9"/><path d="M18.9 8.6 L23.7 5 V9.8 Z" fill="#333" stroke="#333" stroke-width="0.8"/></svg><div class="b" style="left:1922px;top:284px;width:500px;height:144px;background:#fff;border-radius:15px;box-shadow:0 8px 40px rgba(0,0,0,0.16), 0 2px 6px rgba(0,0,0,0.06)"></div><div class="t" style="left:1954.50px;top:309.83px;font-size:28.2px;line-height:28.2px;color:#454545;font-weight:400;letter-spacing:1.389px;font-family:'Liberation Sans', sans-serif;">Add to Review Phase</div><div class="t" style="left:1954.75px;top:373.43px;font-size:28.2px;line-height:28.2px;color:#454545;font-weight:400;letter-spacing:1.411px;font-family:'Liberation Sans', sans-serif;">Remove From Review Phase</div><svg class="b" style="left:1795px;top:280px;width:130px;height:60px;" viewBox="0 0 130 60"><circle cx="16.9" cy="22" r="6.8" fill="#dd1f1f"/><path d="M16.9 15.2 L88 25 L86 38.5 L16.9 28.8 Z" fill="#dd1f1f"/><path d="M74.2 12 L109.5 36 L68.2 48.5 L87 38.5 L88.5 25.5 Z" fill="#dd1f1f" stroke="#dd1f1f" stroke-width="6" stroke-linejoin="round"/></svg><div class="t" style="left:968.95px;top:121.50px;font-size:63.94px;line-height:63.94px;color:#3290e8;font-weight:700;font-family:'Liberation Serif', serif;transform:scaleX(1.0105);transform-origin:0 0;text-shadow:7.50px 0.00px 1px #fff,7.24px 1.94px 1px #fff,6.50px 3.75px 1px #fff,5.30px 5.30px 1px #fff,3.75px 6.50px 1px #fff,1.94px 7.24px 1px #fff,0.00px 7.50px 1px #fff,-1.94px 7.24px 1px #fff,-3.75px 6.50px 1px #fff,-5.30px 5.30px 1px #fff,-6.50px 3.75px 1px #fff,-7.24px 1.94px 1px #fff,-7.50px 0.00px 1px #fff,-7.24px -1.94px 1px #fff,-6.50px -3.75px 1px #fff,-5.30px -5.30px 1px #fff,-3.75px -6.50px 1px #fff,-1.94px -7.24px 1px #fff,-0.00px -7.50px 1px #fff,1.94px -7.24px 1px #fff,3.75px -6.50px 1px #fff,5.30px -5.30px 1px #fff,6.50px -3.75px 1px #fff,7.24px -1.94px 1px #fff;">1</div><div class="t" style="left:492.95px;top:381.90px;font-size:63.4px;line-height:63.4px;color:#3290e8;font-weight:700;font-family:'Liberation Serif', serif;transform:scaleX(1.0617);transform-origin:0 0;text-shadow:7.50px 0.00px 1px #fff,7.24px 1.94px 1px #fff,6.50px 3.75px 1px #fff,5.30px 5.30px 1px #fff,3.75px 6.50px 1px #fff,1.94px 7.24px 1px #fff,0.00px 7.50px 1px #fff,-1.94px 7.24px 1px #fff,-3.75px 6.50px 1px #fff,-5.30px 5.30px 1px #fff,-6.50px 3.75px 1px #fff,-7.24px 1.94px 1px #fff,-7.50px 0.00px 1px #fff,-7.24px -1.94px 1px #fff,-6.50px -3.75px 1px #fff,-5.30px -5.30px 1px #fff,-3.75px -6.50px 1px #fff,-1.94px -7.24px 1px #fff,-0.00px -7.50px 1px #fff,1.94px -7.24px 1px #fff,3.75px -6.50px 1px #fff,5.30px -5.30px 1px #fff,6.50px -3.75px 1px #fff,7.24px -1.94px 1px #fff;">2</div><div class="t" style="left:243.01px;top:837.95px;font-size:63.94px;line-height:63.94px;color:#3290e8;font-weight:700;font-family:'Liberation Serif', serif;transform:scaleX(1.0162);transform-origin:0 0;text-shadow:7.50px 0.00px 1px #fff,7.24px 1.94px 1px #fff,6.50px 3.75px 1px #fff,5.30px 5.30px 1px #fff,3.75px 6.50px 1px #fff,1.94px 7.24px 1px #fff,0.00px 7.50px 1px #fff,-1.94px 7.24px 1px #fff,-3.75px 6.50px 1px #fff,-5.30px 5.30px 1px #fff,-6.50px 3.75px 1px #fff,-7.24px 1.94px 1px #fff,-7.50px 0.00px 1px #fff,-7.24px -1.94px 1px #fff,-6.50px -3.75px 1px #fff,-5.30px -5.30px 1px #fff,-3.75px -6.50px 1px #fff,-1.94px -7.24px 1px #fff,-0.00px -7.50px 1px #fff,1.94px -7.24px 1px #fff,3.75px -6.50px 1px #fff,5.30px -5.30px 1px #fff,6.50px -3.75px 1px #fff,7.24px -1.94px 1px #fff;">3</div><div class="t" style="left:2812.95px;top:137.28px;font-size:60.8px;line-height:60.8px;color:#3290e8;font-weight:700;font-family:'Liberation Sans', sans-serif;transform:scaleX(0.8611);transform-origin:0 0;text-shadow:7.50px 0.00px 1px #fff,7.24px 1.94px 1px #fff,6.50px 3.75px 1px #fff,5.30px 5.30px 1px #fff,3.75px 6.50px 1px #fff,1.94px 7.24px 1px #fff,0.00px 7.50px 1px #fff,-1.94px 7.24px 1px #fff,-3.75px 6.50px 1px #fff,-5.30px 5.30px 1px #fff,-6.50px 3.75px 1px #fff,-7.24px 1.94px 1px #fff,-7.50px 0.00px 1px #fff,-7.24px -1.94px 1px #fff,-6.50px -3.75px 1px #fff,-5.30px -5.30px 1px #fff,-3.75px -6.50px 1px #fff,-1.94px -7.24px 1px #fff,-0.00px -7.50px 1px #fff,1.94px -7.24px 1px #fff,3.75px -6.50px 1px #fff,5.30px -5.30px 1px #fff,6.50px -3.75px 1px #fff,7.24px -1.94px 1px #fff;">4</div><div class="t" style="left:2283.44px;top:286.05px;font-size:62.86px;line-height:62.86px;color:#3290e8;font-weight:700;font-family:'Liberation Serif', serif;transform:scaleX(1.0243);transform-origin:0 0;text-shadow:7.50px 0.00px 1px #fff,7.24px 1.94px 1px #fff,6.50px 3.75px 1px #fff,5.30px 5.30px 1px #fff,3.75px 6.50px 1px #fff,1.94px 7.24px 1px #fff,0.00px 7.50px 1px #fff,-1.94px 7.24px 1px #fff,-3.75px 6.50px 1px #fff,-5.30px 5.30px 1px #fff,-6.50px 3.75px 1px #fff,-7.24px 1.94px 1px #fff,-7.50px 0.00px 1px #fff,-7.24px -1.94px 1px #fff,-6.50px -3.75px 1px #fff,-5.30px -5.30px 1px #fff,-3.75px -6.50px 1px #fff,-1.94px -7.24px 1px #fff,-0.00px -7.50px 1px #fff,1.94px -7.24px 1px #fff,3.75px -6.50px 1px #fff,5.30px -5.30px 1px #fff,6.50px -3.75px 1px #fff,7.24px -1.94px 1px #fff;font-style:italic;">5</div><div class="b" style="left:0px;top:1489px;width:3px;height:3px;background:#222"></div><svg class="b" style="left:3000px;top:1483px;width:8px;height:9px;" viewBox="0 0 8 9"><path d="M8 0 V9 H1 Z" fill="#222"/></svg>
</body></html>
